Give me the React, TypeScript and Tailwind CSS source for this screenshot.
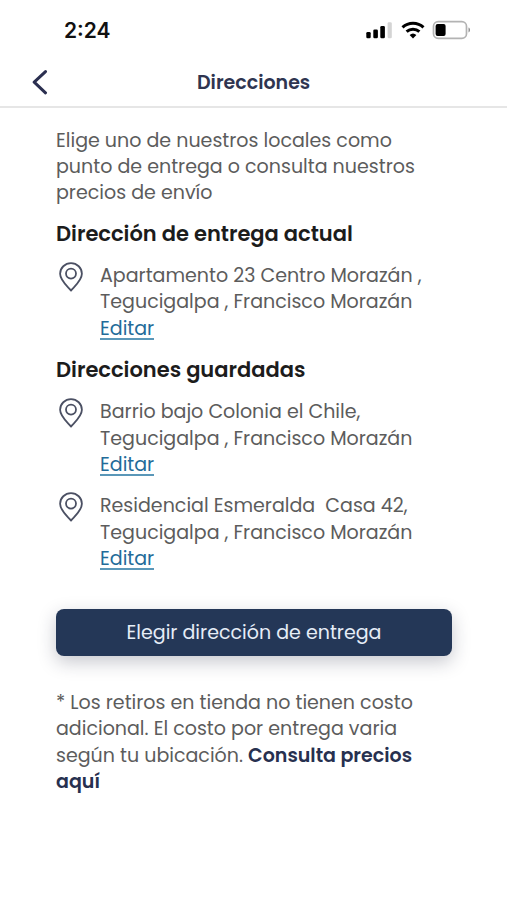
function BackIcon() {
  return (
    <svg width="16" height="26" viewBox="0 0 16 26" fill="none" stroke="#2b2f50" strokeWidth="3" strokeLinecap="round" strokeLinejoin="round">
      <path d="M13.500 1.600 2.200 12.200 13.500 22.800" />
    </svg>
  );
}

function PinIcon() {
  return (
    <svg className="-mt-px" width="24" height="30" viewBox="0 0 24 30" fill="none" stroke="#4b5063" strokeWidth="1.8" strokeLinejoin="round">
      <path d="M12 28.6C9.2 25 1.1 18.6 1.1 11.8a10.9 10.7 0 0 1 21.8 0C22.9 18.6 14.8 25 12 28.6Z" />
      <circle cx="12" cy="11.6" r="5" />
    </svg>
  );
}

function StatusIcons() {
  return (
    <div className="flex items-center">
      <svg width="26" height="18" viewBox="0 0 26 18">
        <rect x="0.3" y="11" width="4.4" height="6.2" rx="1.3" fill="#000" />
        <rect x="7.3" y="8.4" width="4.6" height="8.8" rx="1.3" fill="#000" />
        <rect x="14.3" y="5" width="4.6" height="12.2" rx="1.3" fill="#000" />
        <rect x="21.6" y="1.2" width="4.2" height="16" rx="1.3" fill="#d4d4d4" />
      </svg>
      <svg className="ml-[9px]" width="24" height="18" viewBox="0 0 24 18" fill="none" stroke="#000" strokeWidth="3">
        <path d="M1.5 6.3a15.4 15.4 0 0 1 21 0" />
        <path d="M5.6 10.7a9.4 9.4 0 0 1 12.8 0" />
        <path d="M12 17.4 8.6 14a5 5 0 0 1 6.8 0Z" fill="#000" stroke="none" />
      </svg>
      <svg className="ml-[7px]" width="39" height="20" viewBox="0 0 39 20">
        <rect x="1.5" y="1.7" width="33" height="16.6" rx="4.6" fill="none" stroke="#b3b3b3" strokeWidth="1.7" />
        <rect x="3.6" y="4" width="10" height="12" rx="2" fill="#000" />
        <path d="M36.5 7.6c2 .6 2 4.200 0 4.800Z" fill="#8f8f8f" />
      </svg>
    </div>
  );
}

function Address({ children }: { children: React.ReactNode }) {
  return (
    <div className="flex">
      <div className="w-[44px] pl-[3px]">
        <PinIcon />
      </div>
      <div className="whitespace-pre">
        {children}
        <a className="block h-[24px] w-fit border-b-2 border-[#5a97b8] text-[#236b99]">Editar</a>
      </div>
    </div>
  );
}

export default function App() {
  return (
    <div className="w-full h-[900px] bg-white font-['Poppins','Inter',sans-serif] text-[19.05px] leading-[26.5px] text-[#5c5c5c]">
      <div className="flex h-[60px] items-center justify-between pl-[64px] pr-[36px]">
        <p className="pt-[2px] font-['Inter',sans-serif] text-[21px] font-semibold text-[#111]">2:24</p>
        <StatusIcons />
      </div>
      <div className="flex h-[48px] items-center border-b-2 border-[#e6e6e6] pl-[32px]">
        <BackIcon />
        <p className="ml-[149px] text-[19px] font-semibold text-[#2f3550]">Direcciones</p>
      </div>

      <div className="px-[56px] pt-[19.5px]">
        <div className="whitespace-nowrap leading-[26.3px]">
          <p>Elige uno de nuestros locales como</p>
          <p>punto de entrega o consulta nuestros</p>
          <p>precios de envío</p>
        </div>

        <h2 className="mt-[14.6px] text-[21px] font-semibold text-[#1c1c1c]">Dirección de entrega actual</h2>
        <div className="mt-[15.5px]">
          <Address>
            <p>Apartamento 23 Centro Morazán ,</p>
            <p>Tegucigalpa , Francisco Morazán</p>
          </Address>
        </div>

        <h2 className="mt-[17.2px] text-[21px] font-semibold text-[#1c1c1c]">Direcciones guardadas</h2>
        <div className="mt-[15.5px] flex flex-col gap-[17px]">
          <Address>
            <p>Barrio bajo Colonia el Chile,</p>
            <p>Tegucigalpa , Francisco Morazán</p>
          </Address>
          <Address>
            <p>Residencial Esmeralda  Casa 42,</p>
            <p>Tegucigalpa , Francisco Morazán</p>
          </Address>
        </div>

        <button className="mt-[39px] flex h-[47px] w-[396px] items-center justify-center rounded-lg bg-[#243757] pt-[1.5px] text-[#e6edf7] shadow-[0_6px_18px_rgba(30,35,60,0.25)]">
          <span>Elegir dirección de entrega</span>
        </button>

        <div className="mt-[33.8px] whitespace-nowrap leading-[26.3px]">
          <p>* Los retiros en tienda no tienen costo</p>
          <p>adicional. El costo por entrega varia</p>
          <p>
            <span>según tu ubicación. </span>
            <b className="font-semibold text-[#27304f]">Consulta precios</b>
          </p>
          <p className="font-semibold text-[#27304f]">aquí</p>
        </div>
      </div>
    </div>
  );
}
